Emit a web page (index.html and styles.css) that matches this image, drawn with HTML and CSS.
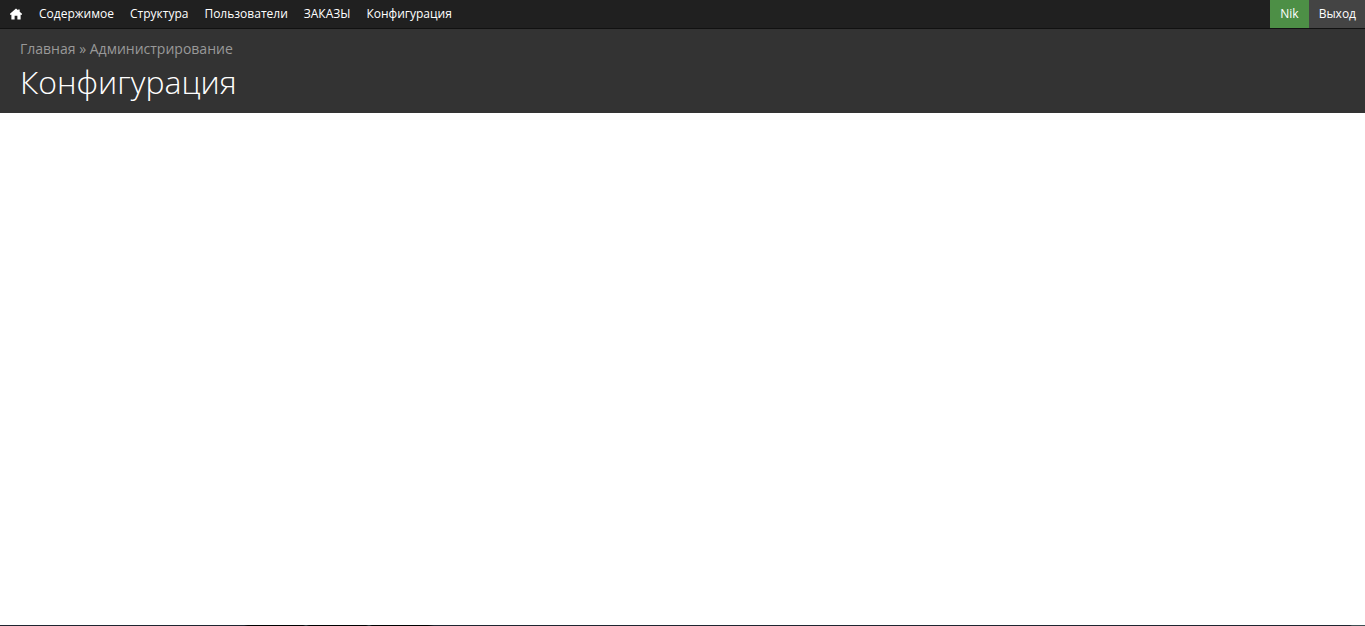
FILE: index.html
```html
<!DOCTYPE html>
<html lang="ru">
<head>
<meta charset="utf-8">
<title>Конфигурация</title>
<link rel="stylesheet" href="styles.css">
</head>
<body>
<nav class="toolbar">
  <a class="home" href="#" aria-label="Главная">
    <svg class="home-icon" viewBox="0 0 13 12" width="12" height="12"><path fill="#fff" d="M6.5 0 L8.8 2 V1 H10.5 V3.5 L13 5.8 V6.8 H11.5 V12 H8 V8 H5 V12 H1.5 V6.8 H0 V5.8 Z"/></svg>
  </a>
  <ul class="menu">
    <li><a href="#">Содержимое</a></li>
    <li><a href="#">Структура</a></li>
    <li><a href="#">Пользователи</a></li>
    <li><a href="#">ЗАКАЗЫ</a></li>
    <li><a href="#">Конфигурация</a></li>
  </ul>
  <div class="user">
    <a class="user-name" href="#">Nik</a>
    <a class="logout" href="#">Выход</a>
  </div>
</nav>
<header class="page-header">
  <div class="breadcrumb"><a href="#">Главная</a> » <a href="#">Администрирование</a></div>
  <h1 class="title">Конфигурация</h1>
</header>
<main class="content"></main>
<div class="bottom-line"></div>
</body>
</html>
```
FILE: styles.css
```css
html, body {
  margin: 0;
  padding: 0;
  height: 100%;
  overflow: hidden;
}
body {
  display: flex;
  flex-direction: column;
  background: #fff;
  font-family: "Open Sans", sans-serif;
}
a {
  color: inherit;
  text-decoration: none;
}
.toolbar {
  display: flex;
  align-items: stretch;
  height: 28px;
  flex: none;
  background: #202020;
  border-bottom: 1px solid #111;
  color: #fff;
  font-size: 12px;
  line-height: 28px;
}
.home {
  display: flex;
  align-items: center;
  padding: 0 10px;
}
.menu {
  display: flex;
  gap: 16px;
  list-style: none;
  margin: 0;
  padding: 0 0 0 7px;
}
.user {
  display: flex;
  margin-left: auto;
}
.user-name {
  padding: 0 10px;
  background: #4d8f46;
  color: #fff;
}
.logout {
  padding: 0 9px 0 10px;
  background: #444;
}
.page-header {
  flex: none;
  height: 84px;
  box-sizing: border-box;
  padding: 10px 20px 0;
  background: #333;
}
.breadcrumb {
  font-size: 14px;
  line-height: 20px;
  color: #999;
}
.title {
  margin: 0;
  font-size: 32px;
  font-weight: 300;
  line-height: 46px;
  color: #fff;
}
.content {
  flex: 1;
}
.bottom-line {
  flex: none;
  height: 1px;
  background: linear-gradient(to right,
    #1f2530 0, #1f2530 244px,
    #000 248px, #000 303px,
    #2a3a40 306px, #000 309px, #000 366px,
    #2a3a40 369px, #000 372px, #000 428px,
    #1f2530 434px, #1f2530 1350px,
    #3f5054 1352px, #3f5054 100%);
}
```
